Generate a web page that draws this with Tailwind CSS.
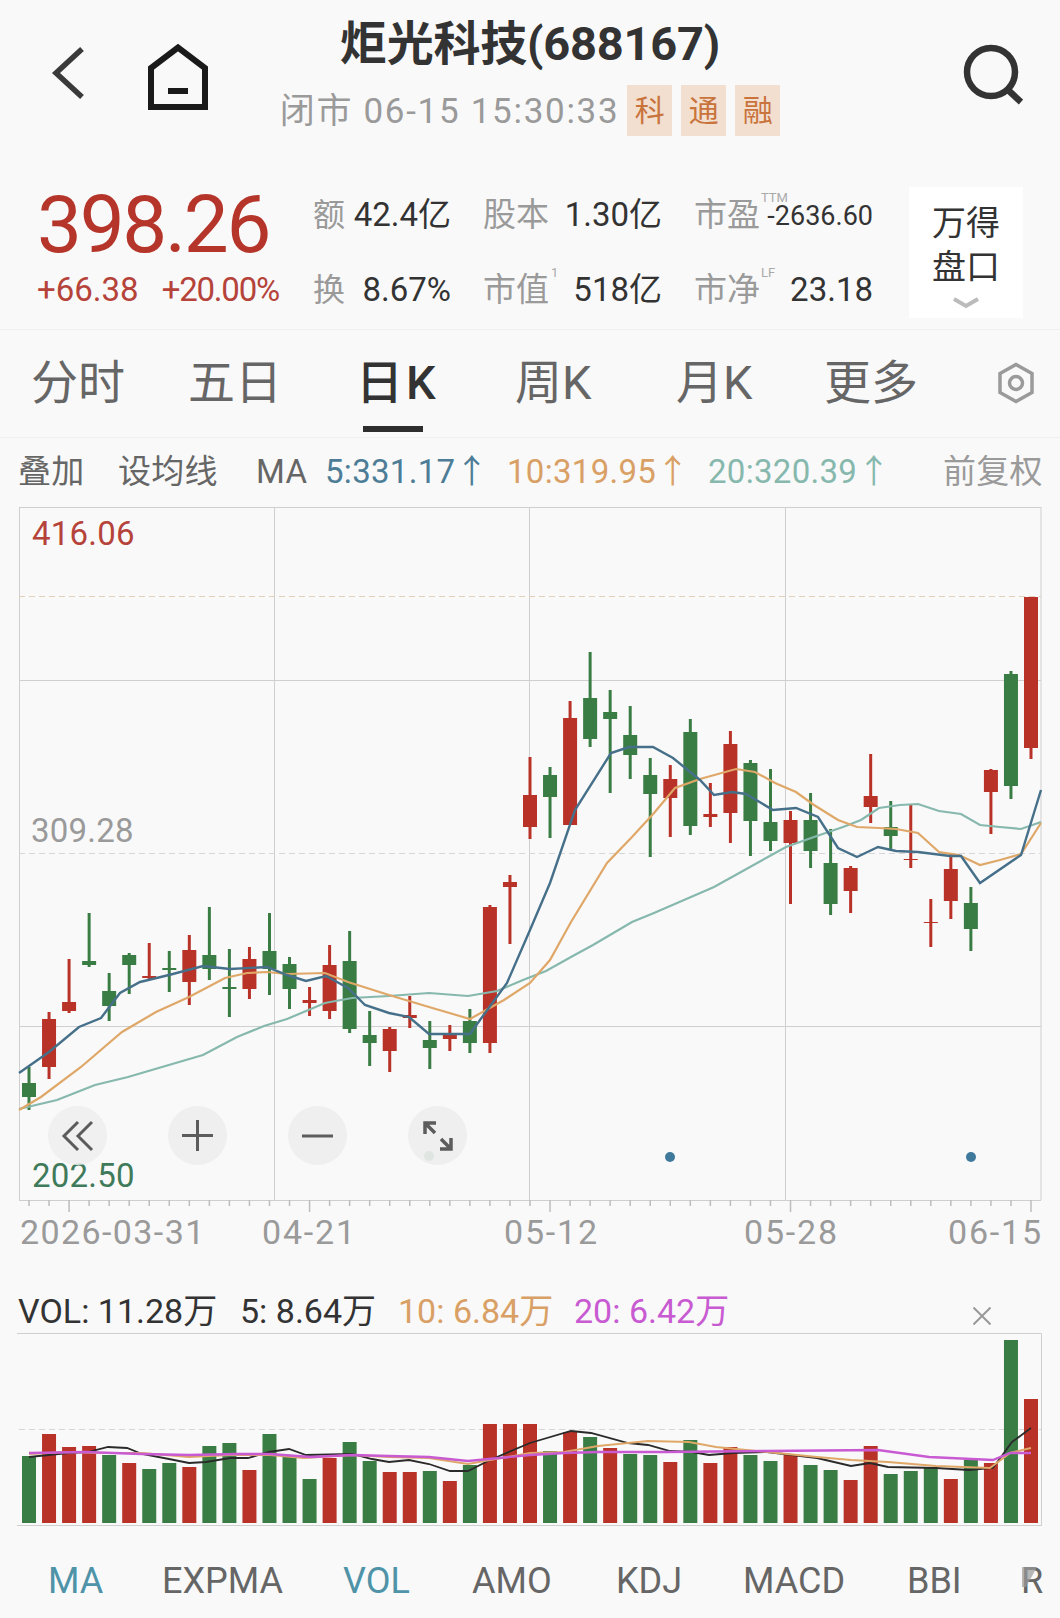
<!DOCTYPE html>
<html lang="zh">
<head>
    <meta charset="UTF-8">
    <title>炬光科技(688167)</title>
    <script src="https://cdn.jsdelivr.net/npm/@tailwindcss/browser@4"></script>
</head>
<body class="bg-[#f9f9f9] font-['Roboto','Noto_Sans_CJK_SC',sans-serif]">
<div class="w-[1060px] h-[1618px] overflow-hidden">

    <!-- Header -->
    <header class="h-[150px] grid grid-cols-[1fr_auto_1fr] pt-[16px]">
        <div class="flex items-start pt-[29px] pl-[50px]">
            <svg class="w-[36px] h-[56px]" viewBox="0 0 36 56" fill="none"><path d="M32 4 L6 28 L32 52" stroke="#3a3a3a" stroke-width="5.5"/></svg>
            <svg class="w-[62px] h-[66px] ml-[61px] -mt-[1px]" viewBox="0 0 62 66" fill="none"><path d="M4 63 V24 L31 3.5 L58 24 V63 Z" stroke="#1a1a1a" stroke-width="6"/><rect x="21" y="44" width="20" height="6" fill="#1a1a1a"/></svg>
        </div>
        <div class="flex flex-col items-center">
            <h1 class="text-[47px] leading-[56px] font-bold text-[#333333] tracking-[-0.2px]">炬光科技(688167)</h1>
            <div class="flex items-center mt-[13px] h-[51px]">
                <span class="text-[35px] leading-[44px] pt-[2px] text-[#9a9a9a] tracking-[1.7px] whitespace-nowrap">闭市 06-15 15:30:33</span>
                <span class="w-[45px] h-[51px] ml-[8px] bg-[#f2dfcf] text-[#c9733d] text-[30px] flex items-center justify-center">科</span>
                <span class="w-[45px] h-[51px] ml-[9px] bg-[#f2dfcf] text-[#c9733d] text-[30px] flex items-center justify-center">通</span>
                <span class="w-[45px] h-[51px] ml-[9px] bg-[#f2dfcf] text-[#c9733d] text-[30px] flex items-center justify-center">融</span>
            </div>
        </div>
        <div class="flex justify-end items-start pt-[27px] pr-[37px]">
            <svg class="w-[62px] h-[62px]" viewBox="0 0 62 62" fill="none"><circle cx="30" cy="29" r="24" stroke="#333333" stroke-width="6.5"/><path d="M46 46 L60 59" stroke="#333333" stroke-width="6.5"/></svg>
        </div>
    </header>

    <!-- Quote -->
    <section class="h-[180px] flex border-b border-[#efefef] pl-[37px]">
        <div class="w-[276px] pt-[35px]">
            <div class="text-[80px] leading-[80px] text-[#b5352a] tracking-[-2.3px]">398.26</div>
            <div class="flex h-[40px] mt-[5px] items-center text-[33px] text-[#b5433a] whitespace-nowrap">
                <span>+66.38</span><span class="ml-[23px] tracking-[-1.2px]">+20.00%</span>
            </div>
        </div>
        <div class="grid grid-cols-[138px_179px_179px] gap-x-[32px] gap-y-[35px] h-[115px] mt-[45px] text-[#333333]">
            <div class="flex justify-between items-center h-[40px]"><span class="text-[32px] text-[#9a9a9a]">额</span><span class="text-[33px]">42.4亿</span></div>
            <div class="flex justify-between items-center h-[40px]"><span class="text-[33px] text-[#9a9a9a]">股本</span><span class="text-[33px]">1.30亿</span></div>
            <div class="flex justify-between items-center h-[40px]">
                <span class="relative text-[33px] text-[#9a9a9a]">市盈<span class="absolute left-full top-[1px] ml-[1px] text-[13px] leading-[13px] text-[#aaaaaa]">TTM</span></span>
                <span class="text-[27px] pt-[3px]">-2636.60</span>
            </div>
            <div class="flex justify-between items-center h-[40px]"><span class="text-[32px] text-[#9a9a9a]">换</span><span class="text-[33px]">8.67%</span></div>
            <div class="flex justify-between items-center h-[40px]">
                <span class="relative text-[33px] text-[#9a9a9a]">市值<span class="absolute left-full top-[1px] ml-[2px] text-[13px] leading-[13px] text-[#aaaaaa]">1</span></span>
                <span class="text-[33px]">518亿</span>
            </div>
            <div class="flex justify-between items-center h-[40px]">
                <span class="relative text-[33px] text-[#9a9a9a]">市净<span class="absolute left-full top-[1px] ml-[1px] text-[13px] leading-[13px] text-[#aaaaaa]">LF</span></span>
                <span class="text-[33px]">23.18</span>
            </div>
        </div>
        <button class="w-[114px] h-[131px] ml-[36px] mt-[37px] bg-white flex flex-col items-center pt-[14px] text-[34px] leading-[44px] text-[#333333]">
            <span>万得</span><span>盘口</span>
            <svg class="w-[26px] h-[12px] mt-[8px]" viewBox="0 0 26 12" fill="none"><path d="M1 2 L13 9 L25 2" stroke="#bbbbbb" stroke-width="4"/></svg>
        </button>
    </section>

    <!-- Period tabs -->
    <nav class="h-[108px] relative flex items-start border-b border-[#f0f0f0] pl-[31px] pt-[21px] text-[47px] leading-[64px] text-[#666666] whitespace-nowrap">
        <span class="w-[94px]">分时</span>
        <span class="w-[94px] ml-[63px]">五日</span>
        <span class="relative ml-[74px] w-[80px] font-medium text-[#333333] tracking-[3px]">日K<span class="absolute left-[7px] top-[75px] w-[60px] h-[6px] bg-[#2e2e2e]"></span></span>
        <span class="ml-[79px] w-[80px]">周K</span>
        <span class="ml-[81px] w-[78px]">月K</span>
        <span class="ml-[70px] w-[94px]">更多</span>
        <svg class="w-[38px] h-[42px] ml-[79px] mt-[11px]" viewBox="0 0 38 42" fill="none"><path d="M19 2.5 L35 11.5 V30.5 L19 39.5 L3 30.5 V11.5 Z" stroke="#9a9a9a" stroke-width="3.5"/><circle cx="19" cy="21" r="6.5" stroke="#9a9a9a" stroke-width="3.5"/></svg>
    </nav>

    <!-- MA row -->
    <div class="h-[67px] flex items-center pl-[18px] text-[33px] text-[#666666] tracking-[0.3px] whitespace-nowrap">
        <span class="w-[66px]">叠加</span>
        <span class="ml-[34px] w-[99px]">设均线</span>
        <span class="ml-[39px] w-[52px]">MA</span>
        <span class="ml-[17px] w-[160px] text-[#4d7d96]">5:331.17↑</span>
        <span class="ml-[22px] w-[180px] text-[#d9a066]">10:319.95↑</span>
        <span class="ml-[21px] w-[180px] text-[#86b8ad]">20:320.39↑</span>
        <span class="ml-[55px] text-[#9a9a9a]">前复权</span>
    </div>

    <!-- K-line chart, svg uses page coordinates -->
    <div class="relative h-[708px] pt-[2px]">
        <svg id="kline" class="block w-[1060px] h-[706px]" viewBox="0 507 1060 706" fill="none"></svg>
        <span class="absolute left-[32px] top-[10px] text-[33px] leading-[38px] text-[#b5433a] tracking-[0.2px]">416.06</span>
        <span class="absolute left-[31px] top-[307px] text-[33px] leading-[38px] text-[#9a9a9a] tracking-[0.2px]">309.28</span>
        <span class="absolute left-[32px] top-[652px] text-[33px] leading-[38px] text-[#3f7a5a] tracking-[0.2px]">202.50</span>
        <div class="absolute left-[48px] top-[601px] flex gap-[61px]">
            <div class="w-[59px] h-[59px] rounded-full bg-[#eeeeee]/90 flex items-center justify-center">
                <svg class="w-[34px] h-[32px]" viewBox="0 0 34 32" fill="none"><path d="M17 2 L3 16 L17 30 M31 2 L17 16 L31 30" stroke="#5c5c5c" stroke-width="3"/></svg>
            </div>
            <div class="w-[59px] h-[59px] rounded-full bg-[#efefef] flex items-center justify-center">
                <svg class="w-[31px] h-[31px]" viewBox="0 0 31 31" fill="none"><path d="M15.5 0 V31 M0 15.5 H31" stroke="#5c5c5c" stroke-width="3"/></svg>
            </div>
            <div class="w-[59px] h-[59px] rounded-full bg-[#efefef] flex items-center justify-center">
                <svg class="w-[31px] h-[4px]" viewBox="0 0 31 4" fill="none"><path d="M0 2 H31" stroke="#5c5c5c" stroke-width="3"/></svg>
            </div>
            <div class="relative w-[59px] h-[59px] rounded-full bg-[#efefef] flex items-center justify-center">
                <svg class="w-[30px] h-[30px]" viewBox="0 0 30 30" fill="none"><path d="M2 13 V2 H13 M2 2 L12 12 M28 17 V28 H17 M28 28 L18 18" stroke="#5c5c5c" stroke-width="3.5"/></svg>
                <span class="absolute left-[16px] bottom-[4px] w-[10px] h-[10px] rounded-full bg-[#dfe6e2]"></span>
            </div>
        </div>
    </div>

    <!-- Date axis -->
    <div class="h-[39px] flex items-center pl-[20px] text-[34px] leading-[39px] text-[#9a9a9a] tracking-[1.8px] whitespace-nowrap">
        <span class="w-[184px] tracking-[1.4px]">2026-03-31</span>
        <span class="ml-[58px] w-[92px]">04-21</span>
        <span class="ml-[150px] w-[93px]">05-12</span>
        <span class="ml-[147px] w-[93px]">05-28</span>
        <span class="ml-[111px]">06-15</span>
    </div>

    <!-- VOL legend -->
    <div class="h-[81px] flex items-center pl-[18px] pt-[37px] text-[34px] leading-[42px] text-[#333333] whitespace-nowrap">
        <span class="w-[200px]">VOL: 11.28万</span>
        <span class="ml-[22px] w-[135px]">5: 8.64万</span>
        <span class="ml-[23px] w-[153px] text-[#d9a066]">10: 6.84万</span>
        <span class="ml-[23px] w-[154px] text-[#c85ad2]">20: 6.42万</span>
        <svg class="w-[18px] h-[18px] ml-[245px] mt-[10px]" viewBox="0 0 18 18" fill="none"><path d="M0.5 0.5 L17.5 17.5 M17.5 0.5 L0.5 17.5" stroke="#999999" stroke-width="2"/></svg>
    </div>

    <!-- Volume chart -->
    <svg id="vol" class="block w-[1060px] h-[197px]" viewBox="0 1333 1060 197" fill="none"></svg>

    <!-- Indicator tabs -->
    <div class="h-[88px] relative flex items-start pl-[48px] pt-[28px] text-[36px] leading-[46px] text-[#666666] whitespace-nowrap">
        <span class="w-[54px] text-[#4e93a8]">MA</span>
        <span class="ml-[60px] w-[120px]">EXPMA</span>
        <span class="ml-[61px] w-[70px] text-[#4e93a8]">VOL</span>
        <span class="ml-[59px] w-[83px]">AMO</span>
        <span class="ml-[61px] w-[62px]">KDJ</span>
        <span class="ml-[65px] w-[101px]">MACD</span>
        <span class="ml-[63px] w-[53px]">BBI</span>
        <span class="relative ml-[61px]">R<svg class="absolute left-[0px] top-[9px] w-[16px] h-[20px]" viewBox="0 0 16 20"><path d="M1 0 H16 L5 20 L1 20 Z" fill="#9a9a9a" fill-opacity="0.7"/></svg></span>
    </div>
</div>

<script>
    const RED = '#b83227', GREEN = '#3a7d44';
    const barX = i => 29 + i * 20.04;

    // hi, lo, bodyTop, bodyBottom, r/g
    const candles = [
        [1067,1110,1083,1097,'g'],[1012,1079,1019,1067,'r'],[959,1013,1002,1011,'r'],[913,967,961,965,'g'],
        [973,1021,991,1006,'g'],[953,994,955,965,'g'],[943,980,976,978,'r'],[951,992,968,970,'g'],
        [935,1005,950,982,'r'],[907,980,955,969,'g'],[949,1017,987,989,'g'],[947,999,959,989,'r'],
        [913,995,951,969,'g'],[957,1009,964,989,'g'],[987,1016,1000,1003,'r'],[945,1019,965,1011,'r'],
        [931,1033,961,1029,'g'],[1011,1066,1035,1043,'g'],[1027,1072,1029,1051,'r'],[996,1028,1015,1018,'r'],
        [1021,1069,1040,1048,'g'],[1025,1051,1035,1039,'r'],[1009,1053,1021,1043,'g'],[905,1053,907,1043,'r'],
        [875,944,882,887,'r'],[757,839,795,827,'r'],[767,838,775,797,'g'],[701,825,718,825,'r'],
        [652,747,698,739,'g'],[690,793,712,719,'g'],[706,779,735,755,'g'],[758,857,775,794,'g'],
        [765,837,779,798,'r'],[719,835,732,826,'g'],[783,827,814,817,'r'],[731,843,744,813,'r'],
        [760,856,763,821,'g'],[769,851,822,841,'g'],[811,904,820,843,'r'],[793,868,820,851,'g'],
        [829,915,863,904,'g'],[866,913,868,891,'r'],[754,823,796,807,'r'],[801,850,827,836,'g'],
        [805,868,859,860,'r'],[899,947,922,923,'r'],[853,919,869,901,'r'],[887,951,903,929,'g'],
        [769,834,770,792,'r'],[671,799,674,786,'g'],[597,759,597,748,'r']
    ];

    const ma5 = '19,1073 49,1052 79,1027 101,1018 120,993 140,982 169,975 203,966 230,969 267,967 287,975 306,981 326,976 348,988 365,1005 389,1013 409,1017 429,1034 470,1034 480,1020 507,983 530,930 550,883 575,810 611,753 629,747 653,747 673,758 700,780 714,795 732,792 746,794 773,810 796,808 818,817 838,848 857,857 878,847 896,851 918,852 950,856 961,856 980,883 1021,855 1041,790';
    const ma10 = '19,1110 41,1097 81,1067 122,1032 156,1012 189,997 225,978 247,973 267,972 287,974 325,973 348,982 389,995 429,1007 470,1019 504,1000 530,983 550,960 571,922 607,863 632,837 654,813 675,788 700,779 736,769 755,772 775,783 796,792 814,805 838,820 857,827 879,828 896,829 918,833 939,852 959,855 980,865 1000,860 1021,854 1041,823';
    const ma20 = '19,1109 57,1100 95,1085 128,1077 162,1067 203,1055 237,1037 264,1026 287,1019 325,1003 352,998 389,996 429,993 468,996 497,991 523,980 546,971 571,957 593,945 632,922 654,913 714,887 750,867 786,847 814,837 843,827 861,820 879,808 900,805 918,804 939,811 961,814 980,825 1000,827 1021,829 1041,822';

    let k = '';
    // grid
    k += '<path d="M19 507.5 H1041 M19 680.5 H1041 M19 1026.5 H1041 M19 1200.5 H1041 M19.5 507 V1200 M274.5 507 V1200 M529.5 507 V1200 M785.5 507 V1200 M1041 507 V1200" stroke="#cfcfcf" stroke-width="1"/>';
    k += '<path d="M19 596.5 H1041" stroke="#e3cfb8" stroke-dasharray="6 4"/>';
    k += '<path d="M19 853.5 H1041" stroke="#d6d6d6" stroke-dasharray="6 4"/>';
    // axis ticks
    candles.forEach((c, i) => {
        const long = [2, 14, 26, 38, 50].includes(i);
        k += `<path d="M${barX(i)} 1200 V${long ? 1212 : 1206}" stroke="#bdbdbd" stroke-width="1.5"/>`;
    });
    // candles
    candles.forEach((c, i) => {
        const col = c[4] === 'r' ? RED : GREEN, x = barX(i);
        k += `<path d="M${x} ${c[0]} V${c[1]}" stroke="${col}" stroke-width="3"/>`;
        k += `<rect x="${x - 7}" y="${c[2]}" width="14" height="${c[3] - c[2]}" fill="${col}"/>`;
    });
    k += `<polyline points="${ma20}" stroke="#86b8ad" stroke-width="2.2"/>`;
    k += `<polyline points="${ma10}" stroke="#dfa768" stroke-width="2.2"/>`;
    k += `<polyline points="${ma5}" stroke="#46708a" stroke-width="2.4"/>`;
    k += '<circle cx="670" cy="1157" r="5" fill="#3f7a9c"/><circle cx="971" cy="1157" r="5" fill="#3f7a9c"/>';
    document.getElementById('kline').innerHTML = k;

    // volume bars, top y on the page
    const vols = [
        [1456,'g'],[1434,'r'],[1447,'r'],[1446,'r'],[1455,'g'],[1463,'r'],[1469,'g'],[1463,'g'],[1467,'r'],[1446,'g'],
        [1443,'g'],[1470,'r'],[1434,'g'],[1457,'g'],[1479,'g'],[1458,'r'],[1442,'g'],[1461,'g'],[1472,'r'],[1472,'r'],
        [1471,'g'],[1481,'r'],[1465,'g'],[1424,'r'],[1424,'r'],[1424,'r'],[1451,'g'],[1432,'r'],[1437,'g'],[1448,'r'],
        [1454,'g'],[1455,'g'],[1462,'r'],[1440,'g'],[1463,'r'],[1447,'r'],[1455,'g'],[1461,'g'],[1455,'r'],[1465,'g'],
        [1470,'g'],[1480,'r'],[1446,'r'],[1474,'g'],[1471,'g'],[1468,'g'],[1479,'r'],[1460,'g'],[1463,'r'],[1340,'g'],[1399,'r']
    ];
    const volK = '29,1457 68,1453 88,1452 108,1447 127,1448 142,1454 169,1459 189,1463 206,1462 230,1458 248,1458 269,1452 289,1449 306,1455 352,1454 372,1459 389,1462 409,1460 429,1464 450,1471 468,1471 490,1460 530,1443 571,1431 591,1433 628,1443 648,1445 670,1451 692,1452 709,1455 733,1453 767,1452 817,1458 851,1466 870,1463 888,1467 936,1468 969,1470 993,1468 1012,1442 1031,1428';
    const volO = '29,1454 68,1452 101,1453 142,1453 189,1457 230,1455 270,1455 304,1458 352,1455 389,1457 429,1458 468,1464 530,1453 564,1452 598,1446 648,1441 689,1442 716,1447 767,1452 817,1457 851,1460 888,1462 936,1466 990,1468 1010,1453 1031,1448';
    const volM = '29,1453 85,1452 142,1454 189,1455 237,1454 270,1454 311,1457 352,1455 389,1456 429,1457 468,1461 530,1455 564,1453 598,1452 665,1452 767,1451 878,1450 929,1457 993,1460 1010,1453 1031,1453';

    let v = '<path d="M17 1333.5 H1041.5 V1525.5 H17" stroke="#cfcfcf"/>';
    v += '<path d="M19 1429.5 H1041" stroke="#d6d6d6" stroke-dasharray="6 4"/>';
    vols.forEach((b, i) => {
        v += `<rect x="${barX(i) - 7}" y="${b[0]}" width="14" height="${1523 - b[0]}" fill="${b[1] === 'r' ? RED : GREEN}"/>`;
    });
    v += `<polyline points="${volK}" stroke="#2a2a2a" stroke-width="1.8"/>`;
    v += `<polyline points="${volO}" stroke="#dfa768" stroke-width="2"/>`;
    v += `<polyline points="${volM}" stroke="#c85ad2" stroke-width="2.4"/>`;
    document.getElementById('vol').innerHTML = v;
</script>
</body>
</html>
